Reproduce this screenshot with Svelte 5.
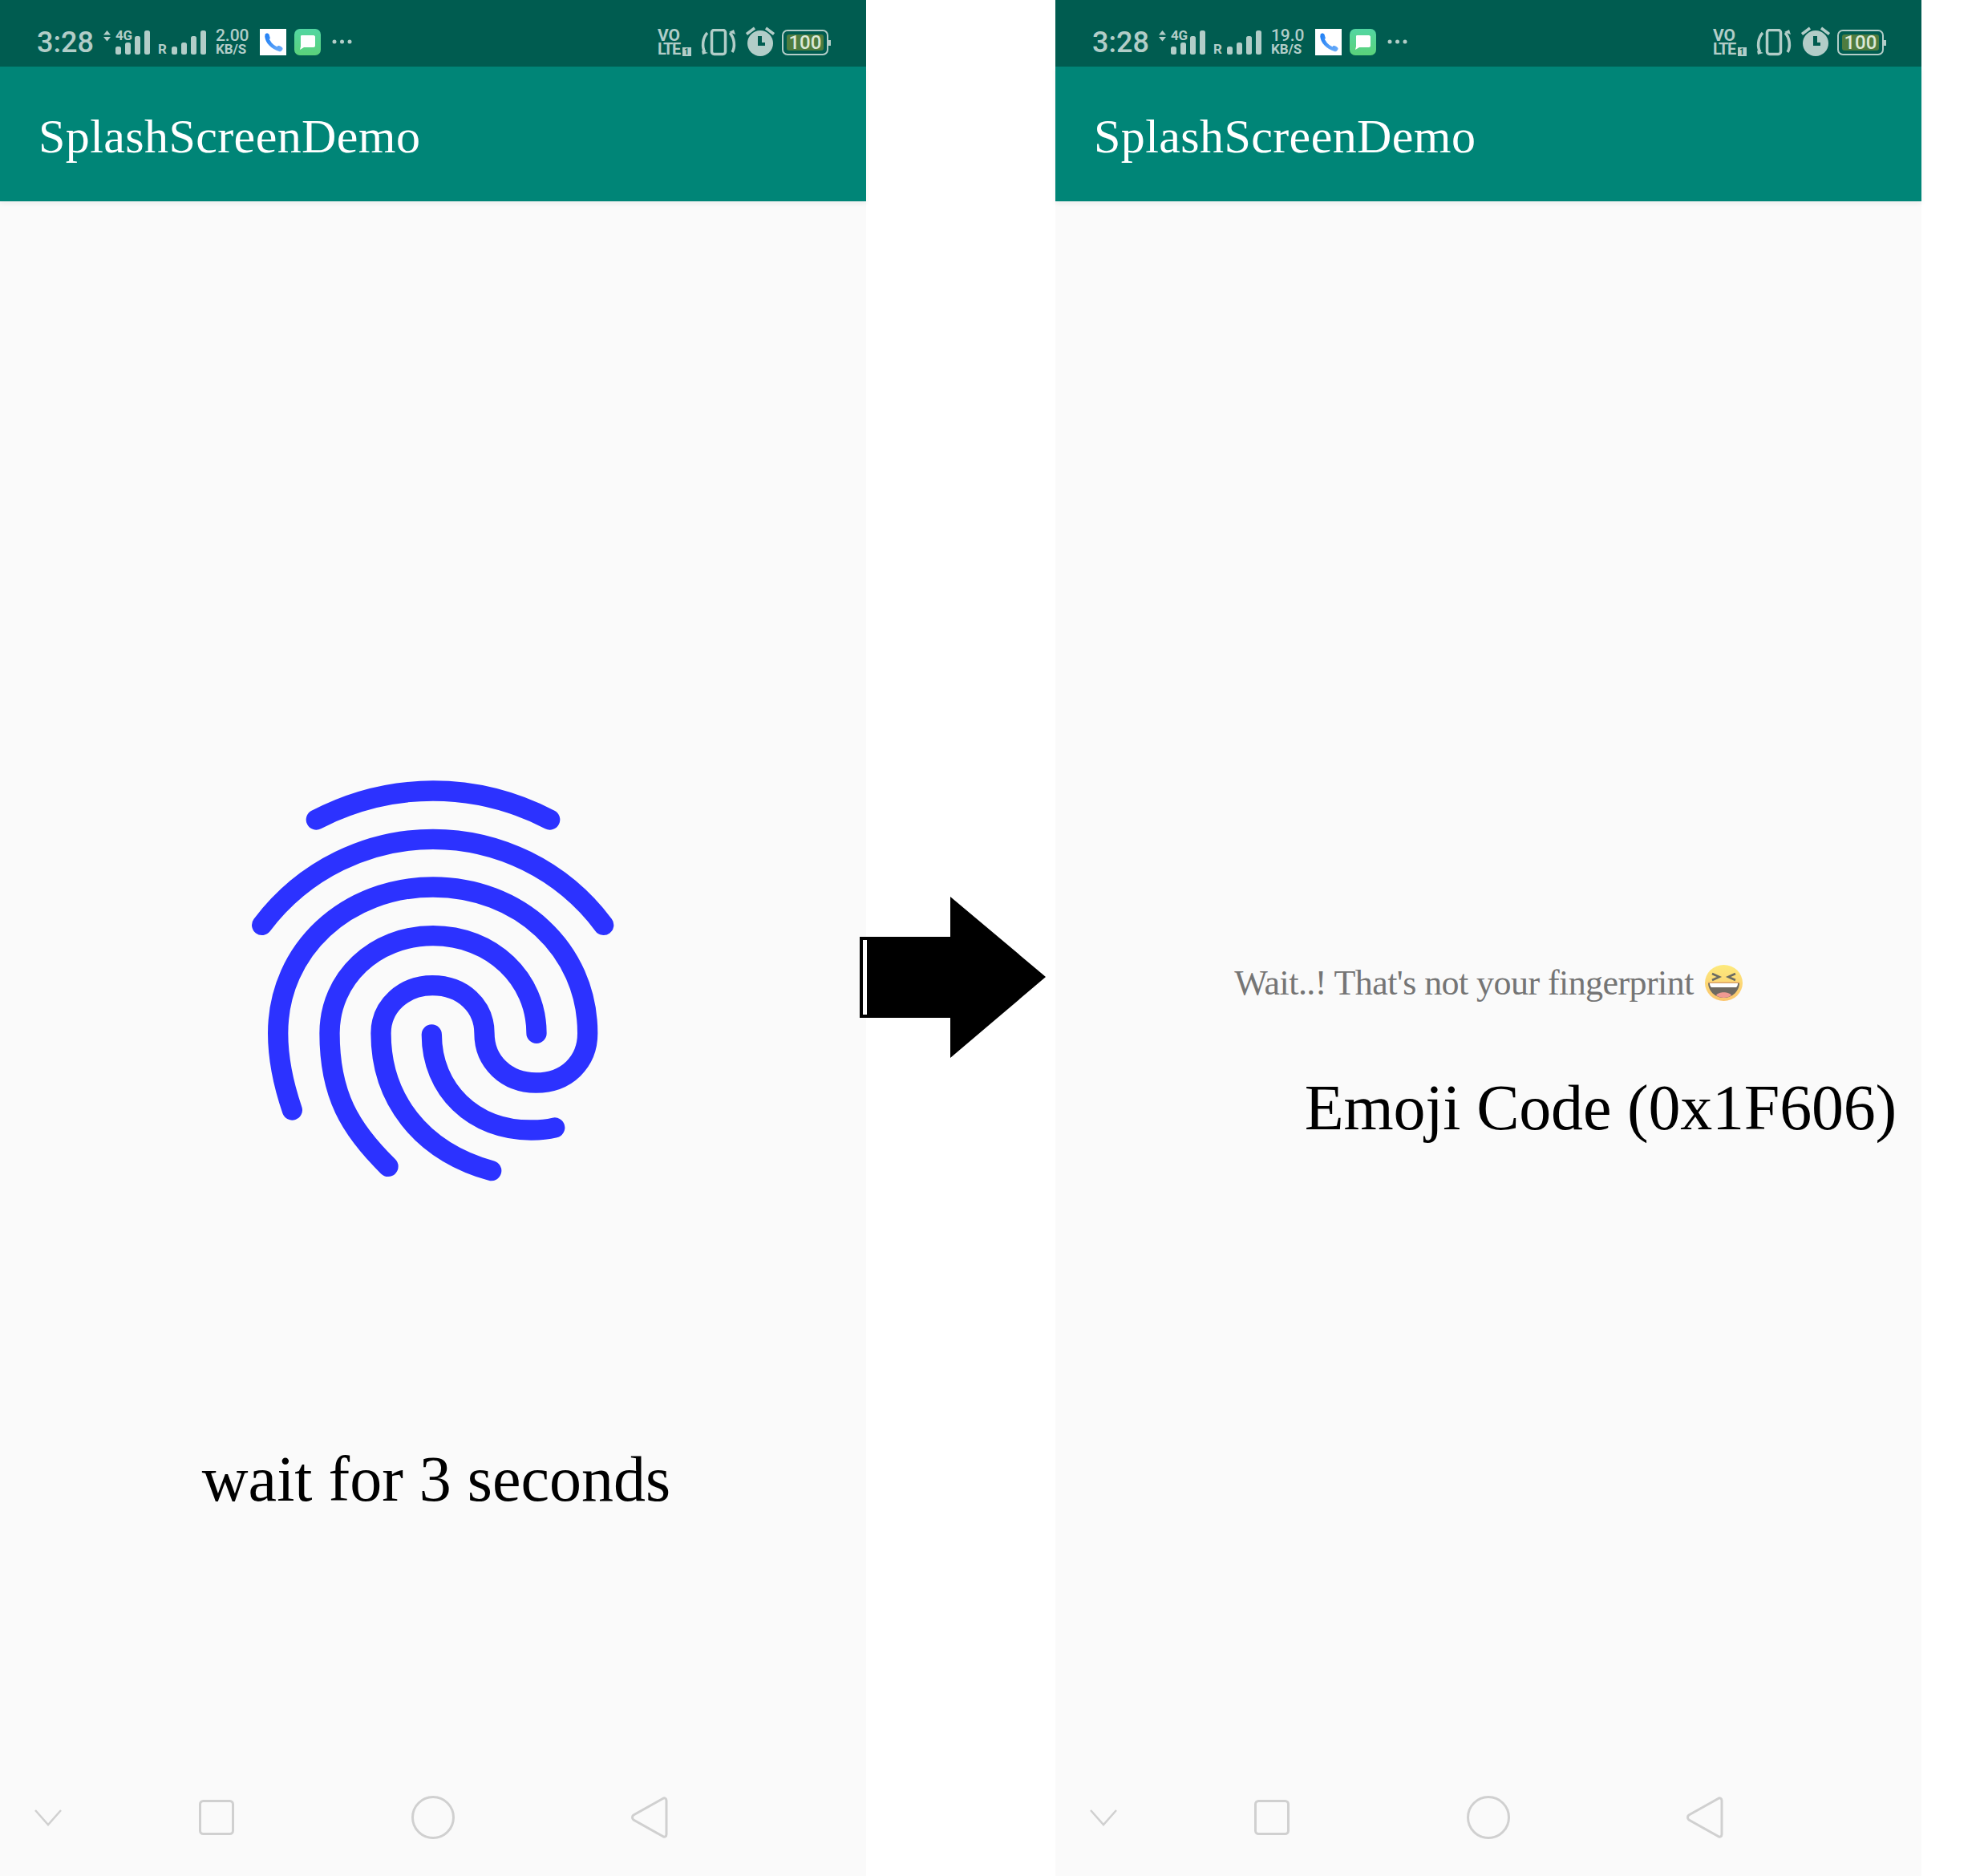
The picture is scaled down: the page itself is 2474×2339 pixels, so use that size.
<script>
  const navStroke = '#d0d0d0';
  const signal = [10, 15, 23, 30];
</script>

{#snippet bars()}
  <svg class="bars" width="43" height="30" viewBox="0 0 43 30">
    {#each signal as h, i}
      <rect x={i * 12} y={30 - h} width="7" height={h} rx="2.5" fill="#b2cdc8" />
    {/each}
  </svg>
{/snippet}

{#snippet phone(id, speed, content)}
  <section class="phone">
    <header class="status">
      <span class="time">3:28</span>
      <svg class="updown" width="9" height="14" viewBox="0 0 9 14">
        <path d="M4.500 0 9 5.500H0zM0 8h9l-4.500 5.500z" fill="#b2cdc8" />
      </svg>
      <div class="net">
        <span class="g">4G</span>
        {@render bars()}
      </div>
      <span class="r">R</span>
      {@render bars()}
      <div class="speed"><span>{speed}</span><span class="unit">KB/S</span></div>
      <svg class="app-call" width="33" height="33" viewBox="0 0 33 33">
        <defs>
          <linearGradient id={'call' + id} x1="0" y1="0" x2="1" y2="1">
            <stop offset="0" stop-color="#1f7ff5" />
            <stop offset="1" stop-color="#6cadf9" />
          </linearGradient>
        </defs>
        <rect width="33" height="33" fill="#fff" />
        <path d="M8.500 9c.5 7 6.500 14 16.500 17" fill="none" stroke={'url(#call' + id + ')'} stroke-width="4.500" stroke-linecap="round" />
        <path d="M6.500 7c1-2 4-2 5 0l1.500 5-4 2zM20 25l2.500-4c2-.5 5 1 6 3 .5 2-1.500 4-3.500 3.500z" fill={'url(#call' + id + ')'} />
      </svg>
      <svg class="app-msg" width="33" height="33" viewBox="0 0 33 33">
        <defs>
          <linearGradient id={'msg' + id} x1="0" y1="0" x2="0" y2="1">
            <stop offset="0" stop-color="#52d6a2" />
            <stop offset="1" stop-color="#5bd27a" />
          </linearGradient>
        </defs>
        <rect width="33" height="33" rx="7" fill={'url(#msg' + id + ')'} />
        <path d="M9 8h15c1 0 2 1 2 2v11c0 1-1 2-2 2H12l-5 3 1-4V10c0-1 0-2 1-2z" fill="#fff" />
      </svg>
      <svg class="more" width="25" height="6" viewBox="0 0 25 6">
        <circle cx="3" cy="3" r="2.500" fill="#b2cdc8" />
        <circle cx="12.500" cy="3" r="2.500" fill="#b2cdc8" />
        <circle cx="22" cy="3" r="2.500" fill="#b2cdc8" />
      </svg>

      <div class="right">
        <div class="volte">
          <span class="vo">VO</span>
          <span class="lte">LTE<i>1</i></span>
        </div>
        <svg class="vibrate" width="44" height="36" viewBox="0 0 44 36" fill="none" stroke="#b2cdc8">
          <rect x="13.500" y="1.500" width="17" height="30" rx="3" stroke-width="3.500" />
          <path d="M8 5C2 11 1 23 5 29M36 5c6 6 7 18 3 24" stroke-width="3.500" />
          <path d="M1 27l8 3-7 2zM43 7l-8-3 6-3z" fill="#b2cdc8" stroke="none" />
        </svg>
        <svg class="alarm" width="36" height="37" viewBox="0 0 36 37">
          <circle cx="18" cy="21" r="16" fill="#b2cdc8" />
          <path d="M1 9.500 11 2M35 9.500 25 2" stroke="#b2cdc8" stroke-width="3.500" fill="none" />
          <path d="M15 12h5v8h4v4h-9z" fill="#005c50" />
        </svg>
        <div class="battery">
          <span class="cell"><span>100</span></span>
          <span class="nub"></span>
        </div>
      </div>
    </header>

    <div class="appbar">SplashScreenDemo</div>

    <main class="content">
      {@render content()}
    </main>

    <nav class="nav">
      <svg class="nav-down" width="36" height="22" viewBox="0 0 36 22" fill="none" stroke={navStroke} stroke-width="2.500">
        <path d="M2 2l16 18L34 2" />
      </svg>
      <svg class="nav-square" width="44" height="44" viewBox="0 0 44 44" fill="none" stroke={navStroke} stroke-width="3">
        <rect x="1.500" y="1.500" width="41" height="41" rx="4" />
      </svg>
      <svg class="nav-circle" width="54" height="54" viewBox="0 0 54 54" fill="none" stroke={navStroke} stroke-width="3">
        <circle cx="27" cy="27" r="25.500" />
      </svg>
      <svg class="nav-back" width="46" height="52" viewBox="0 0 46 52" fill="none" stroke={navStroke} stroke-width="3">
        <path d="M44 5c0-3-2.500-4-4.500-2.500L3 23c-2 1.500-2 4.500 0 6l36.500 20.500c2 1.500 4.500 .5 4.500-2.500z" />
      </svg>
    </nav>
  </section>
{/snippet}

{#snippet fingerprintScreen()}
  <svg class="fingerprint" width="520" height="560" viewBox="0 0 1560 1680" fill="none" stroke="#2c32ff" stroke-width="76" stroke-linecap="round">
    <path d="M343 246C620 102 940 102 1217 246" />
    <path d="M140 640C300 429 540 319 780 319C1020 319 1260 429 1418 640" />
    <path d="M253 1332C215 1221 200 1136 200 1045C200 729 460 498 780 498C1100 498 1358 729 1358 1045C1358 1152 1280 1230 1165 1230C1055 1230 972 1152 972 1045C972 943 890 866 778 866C670 866 585 943 585 1045C585 1286 730 1484 998 1559" />
    <path d="M612 1543C470 1404 393 1275 393 1045C393 841 560 680 780 680C1000 680 1167 841 1167 1045" />
    <path d="M775 1050C775 1254 930 1409 1150 1407C1180 1407 1210 1404 1235 1398" />
  </svg>
  <p class="wait">wait for 3 seconds</p>
{/snippet}

{#snippet emojiScreen()}
  <div class="notice">
    <span>Wait..! That's not your fingerprint</span>
    <svg class="emoji" width="47" height="45" viewBox="0 0 47 45">
      <defs>
        <linearGradient id="face" x1="0" y1="0" x2="0" y2="1">
          <stop offset="0" stop-color="#fdea7c" />
          <stop offset="1" stop-color="#fbc56e" />
        </linearGradient>
      </defs>
      <ellipse cx="23.500" cy="22.500" rx="23.500" ry="22.500" fill="url(#face)" />
      <path d="M9 11l9 4-9 4M38 11l-9 4 9 4" fill="none" stroke="#6b6b62" stroke-width="2.500" />
      <path d="M4 22h39c0 11-9 19-19.500 19S4 33 4 22z" fill="#6f6a62" />
      <path d="M6 23h35c0 3-1 4-2 5H8c-1-1-2-2-2-5z" fill="#fff" />
      <path d="M4 22h39" stroke="#f5b66b" stroke-width="1.500" />
      <path d="M14 38c3-5 16-5 19 0-5 4-14 4-19 0z" fill="#f19a92" />
    </svg>
  </div>
  <p class="code">Emoji Code (0x1F606)</p>
{/snippet}

<div class="page">
  {@render phone('a', '2.00', fingerprintScreen)}
  {@render phone('b', '19.0', emojiScreen)}

  <svg class="arrow" width="233" height="202" viewBox="0 0 233 202">
    <path fill-rule="evenodd" d="M113 0 232 100 113 201V151H0V50H113zM4 54V147H9V54z" fill="#000" />
  </svg>
</div>

<style>
  :global(body) {
    margin: 0;
    background: #fff;
  }

  .page {
    position: relative;
    display: flex;
    gap: 236px;
    width: 2474px;
    height: 2339px;
    background: #fff;
  }

  .phone {
    display: flex;
    flex-direction: column;
    width: 1080px;
    height: 2339px;
    background: #fafafa;
  }

  .status {
    display: flex;
    align-items: flex-start;
    height: 83px;
    box-sizing: border-box;
    padding: 36px 0 0 46px;
    background: #005c50;
    color: #b2cdc8;
    font-family: Roboto, "Liberation Sans", sans-serif;
    font-weight: 500;
  }

  .time {
    width: 83px;
    font-size: 36px;
    line-height: 34px;
  }

  .updown {
    margin-top: 2px;
  }

  .net {
    position: relative;
    margin-left: 6px;
    padding-top: 2px;
  }

  .g {
    position: absolute;
    left: 0;
    top: 0;
    font-size: 17px;
    font-weight: 700;
    line-height: 17px;
    letter-spacing: -0.3px;
  }

  .net .bars {
    display: block;
  }

  .r {
    margin: 18px 6px 0 10px;
    font-size: 17px;
    font-weight: 700;
    line-height: 14px;
  }

  .status > .bars {
    margin-top: 2px;
  }

  .speed {
    display: flex;
    flex-direction: column;
    width: 42px;
    margin-left: 12px;
    font-size: 21px;
    line-height: 17px;
  }

  .unit {
    font-size: 17px;
    font-weight: 700;
  }

  .app-call {
    margin-left: 13px;
  }

  .app-msg {
    margin-left: 10px;
  }

  .more {
    margin: 13px 0 0 14px;
  }

  .right {
    display: flex;
    align-items: flex-start;
    margin-left: 381px;
  }

  .volte {
    display: flex;
    flex-direction: column;
    width: 42px;
    font-weight: 700;
    line-height: 17px;
  }

  .vo {
    font-size: 21px;
  }

  .lte {
    display: flex;
    align-items: flex-end;
    font-size: 20px;
    letter-spacing: -1.5px;
    white-space: nowrap;
  }

  .lte i {
    width: 11px;
    margin-left: 3px;
    background: #b2cdc8;
    color: #005c50;
    font-size: 10px;
    font-style: normal;
    letter-spacing: 0;
    line-height: 11px;
    text-align: center;
  }

  .vibrate {
    margin-left: 12px;
  }

  .alarm {
    margin: -3px 0 0 12px;
  }

  .battery {
    display: flex;
    align-items: center;
    margin: 1px 0 0 9px;
  }

  .cell {
    display: block;
    width: 58px;
    height: 32px;
    box-sizing: border-box;
    padding: 4px;
    border: 2px solid #b2cdc8;
    border-radius: 7px;
  }

  .cell span {
    display: block;
    height: 20px;
    border-radius: 3px;
    background: #4f7c3f;
    color: #dbe8d6;
    font-size: 24px;
    line-height: 20px;
    text-align: center;
  }

  .nub {
    width: 3px;
    height: 7px;
    background: #b2cdc8;
  }

  .appbar {
    position: relative;
    height: 168px;
    box-sizing: border-box;
    padding: 52px 0 0 48px;
    background: #008577;
    box-shadow: 0 3px 6px rgba(0, 0, 0, 0.05);
    color: #fff;
    font-family: "Liberation Serif", serif;
    font-size: 60px;
    letter-spacing: 0.4px;
    line-height: 70px;
  }

  .content {
    flex: 1;
    display: flex;
    flex-direction: column;
    align-items: center;
    font-family: "Liberation Serif", serif;
  }

  .fingerprint {
    margin-top: 689px;
  }

  .wait {
    margin: 298px 0 0 8px;
    color: #000;
    font-size: 80px;
    line-height: 92px;
  }

  .notice {
    display: flex;
    align-items: center;
    gap: 14px;
    margin-top: 952px;
    color: #757575;
    font-size: 44px;
    letter-spacing: -0.57px;
    line-height: 45px;
  }

  .code {
    align-self: flex-end;
    margin: 87px 31px 0 0;
    color: #000;
    font-size: 80px;
    letter-spacing: -0.2px;
    line-height: 92px;
  }

  .nav {
    display: flex;
    align-items: center;
    height: 150px;
    flex-shrink: 0;
    padding-top: 3px;
    box-sizing: border-box;
  }

  .nav-down {
    margin-left: 42px;
  }

  .nav-square {
    margin-left: 170px;
  }

  .nav-circle {
    margin-left: 221px;
  }

  .nav-back {
    margin-left: 220px;
  }

  .arrow {
    position: absolute;
    left: 1072px;
    top: 1118px;
  }
</style>
